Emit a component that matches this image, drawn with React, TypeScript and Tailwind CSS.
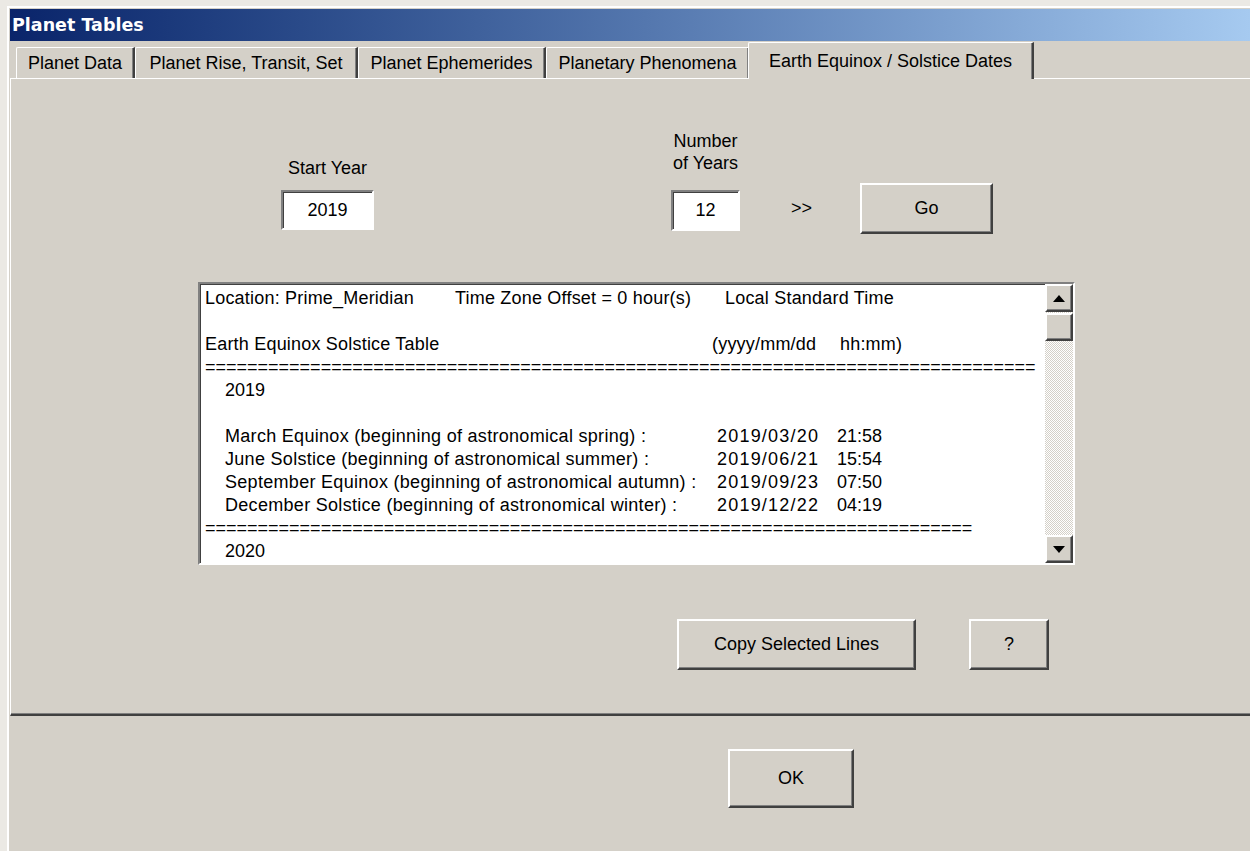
import React from 'react'

type Row =
  | { kind: 'blank' }
  | { kind: 'rule'; count: number }
  | { kind: 'year'; text: string }
  | { kind: 'event'; label: string; date: string; time: string }

const raised =
  'border-2 border-t-white border-l-white border-r-[#404040] border-b-[#404040] shadow-[inset_-1px_-1px_#808080] bg-[#d4d0c8]'
const sunken =
  'border-2 border-t-[#808080] border-l-[#808080] border-r-white border-b-white shadow-[inset_1px_1px_#404040] bg-white'

const tabs = [
  { label: 'Planet Data', w: 'w-[119px]' },
  { label: 'Planet Rise, Transit, Set', w: 'w-[223px]' },
  { label: 'Planet Ephemerides', w: 'w-[188px]' },
  { label: 'Planetary Phenomena', w: 'w-[204px]' },
]

const rows: Row[] = [
  { kind: 'rule', count: 79 },
  { kind: 'year', text: '2019' },
  { kind: 'blank' },
  { kind: 'event', label: 'March Equinox (beginning of astronomical spring) :', date: '2019/03/20', time: '21:58' },
  { kind: 'event', label: 'June Solstice (beginning of astronomical summer) :', date: '2019/06/21', time: '15:54' },
  { kind: 'event', label: 'September Equinox (beginning of astronomical autumn) :', date: '2019/09/23', time: '07:50' },
  { kind: 'event', label: 'December Solstice (beginning of astronomical winter) :', date: '2019/12/22', time: '04:19' },
  { kind: 'rule', count: 73 },
  { kind: 'year', text: '2020' },
]

function Button({ label, className }: { label: string; className: string }) {
  return (
    <button className={`${raised} ${className} flex items-center justify-center text-[18px] text-black`}>
      {label}
    </button>
  )
}

function Arrow({ up }: { up?: boolean }) {
  return (
    <svg width="12" height="7" viewBox="0 0 12 7">
      {up ? <polygon points="6,0 12,7 0,7" fill="#000" /> : <polygon points="0,0 12,0 6,7" fill="#000" />}
    </svg>
  )
}

function Listing() {
  return (
    <div className={`${sunken} flex w-[877px] h-[283px] ml-[187px] mt-[48px]`}>
      <div className="flex-1 overflow-hidden pl-[5px] pt-[3px] leading-[23px] text-[18px] text-black whitespace-pre">
        <div className="flex tracking-[0.2px]">
          <span className="w-[250px]">Location: Prime_Meridian</span>
          <span className="w-[270px]">Time Zone Offset = 0 hour(s)</span>
          <span>Local Standard Time</span>
        </div>
        <div className="h-[23px]" />
        <div className="flex tracking-[0.2px]">
          <span className="w-[507px]">Earth Equinox Solstice Table</span>
          <span className="w-[128px]">(yyyy/mm/dd</span>
          <span>hh:mm)</span>
        </div>
        {rows.map((r, i) => {
          if (r.kind === 'blank') return <div key={i} className="h-[23px]" />
          if (r.kind === 'rule') return <div key={i}>{'='.repeat(r.count)}</div>
          if (r.kind === 'year') return <div key={i} className="pl-[20px]">{r.text}</div>
          return (
            <div key={i} className="flex pl-[20px]">
              <span className="w-[492px] tracking-[0.3px]">{r.label}</span>
              <span className="w-[120px] tracking-[1.2px]">{r.date}</span>
              <span>{r.time}</span>
            </div>
          )
        })}
      </div>
      {/* vertical scrollbar */}
      <div className="w-[28px] flex flex-col bg-[repeating-conic-gradient(#d4d0c8_0_25%,#ffffff_0_50%)] bg-[length:2px_2px]">
        <div className={`${raised} h-[28px] flex items-center justify-center`}>
          <Arrow up />
        </div>
        <div className={`${raised} h-[28px] mt-[1px]`} />
        <div className="flex-1" />
        <div className={`${raised} h-[28px] flex items-center justify-center`}>
          <Arrow />
        </div>
      </div>
    </div>
  )
}

export default function App() {
  return (
    <div className="w-[1250px] h-[851px] overflow-hidden bg-[#ebe9e4] pl-[7px] pt-[6px] font-['Liberation_Sans',Arial,sans-serif] text-black">
      <div className="h-[845px] border-l-2 border-t-2 border-white bg-[#d4d0c8] pl-[1px] pt-[1px]">
        {/* caption */}
        <div className="h-[32px] flex items-center pl-[2px] bg-gradient-to-r from-[#0a246a] to-[#a6caf0]">
          <span className="font-['DejaVu_Sans',sans-serif] font-bold text-[17.5px] text-white">Planet Tables</span>
        </div>

        {/* tab strip */}
        <div className="flex items-end h-[37px] pl-[6px]">
          {tabs.map((t) => (
            <div
              key={t.label}
              className={`${t.w} h-[31px] flex items-center justify-center pt-[1px] border-l border-t border-r-2 border-l-white border-t-white border-r-[#404040] shadow-[inset_-1px_0_#808080] rounded-tl-[2px] text-[18px]`}
            >
              {t.label}
            </div>
          ))}
          <div className="relative z-10 -ml-[2px] w-[286px] h-[37px] -mb-px flex items-start justify-center pt-[5px] border-l border-t border-r-2 border-l-white border-t-white border-r-[#404040] shadow-[inset_-1px_0_#808080] bg-[#d4d0c8] rounded-tl-[2px] text-[18px]">
            Earth Equinox / Solstice Dates
          </div>
        </div>

        {/* tab page */}
        <div className="h-[638px] border-l border-t border-white border-b-2 border-b-[#404040] shadow-[0_-1px_0_#808080_inset]">
          <div className="flex items-start mt-[51px]">
            <div className="flex flex-col items-center ml-[270px] mt-[28px]">
              <div className="leading-[20px] text-[18px] mb-[12px]">Start Year</div>
              <div className={`${sunken} w-[93px] h-[40px] flex items-center justify-center text-[18px]`}>2019</div>
            </div>
            <div className="flex flex-col items-center ml-[297px]">
              <div className="leading-[22px] text-[18px] text-center mb-[16px]">
                Number
                <br />
                of Years
              </div>
              <div className={`${sunken} w-[69px] h-[41px] flex items-center justify-center text-[18px]`}>12</div>
            </div>
            <div className="ml-[51px] mt-[68px] leading-[20px] text-[18px]">&gt;&gt;</div>
            <Button label="Go" className="ml-[48px] mt-[53px] w-[133px] h-[51px]" />
          </div>

          <Listing />

          <div className="flex mt-[54px]">
            <Button label="Copy Selected Lines" className="ml-[666px] w-[239px] h-[51px]" />
            <Button label="?" className="ml-[53px] w-[80px] h-[51px]" />
          </div>
        </div>

        <Button label="OK" className="ml-[718px] mt-[33px] w-[126px] h-[59px]" />
      </div>
    </div>
  )
}
